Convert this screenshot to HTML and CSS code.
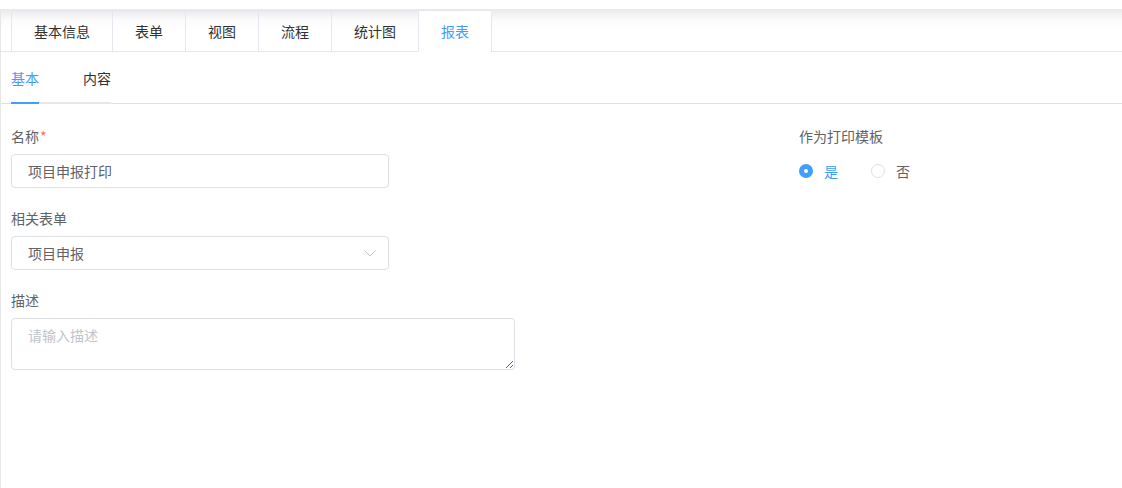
FILE: index.html
```html
<!DOCTYPE html>
<html lang="zh-CN">
<head>
  <meta charset="UTF-8">
  <meta name="viewport" content="width=device-width, initial-scale=1.0">
  <title>报表设置</title>
  <link rel="stylesheet" href="styles.css">
</head>
<body>
  <div class="page">
    <div class="card-tabs">
      <div class="card-nav">
        <div class="card-tab">基本信息</div>
        <div class="card-tab">表单</div>
        <div class="card-tab">视图</div>
        <div class="card-tab">流程</div>
        <div class="card-tab">统计图</div>
        <div class="card-tab active">报表</div>
      </div>
    </div>

    <div class="sub-tabs">
      <div class="sub-nav">
        <div class="sub-tab active">基本</div>
        <div class="sub-tab">内容</div>
      </div>
    </div>

    <form class="report-form">
      <div class="col-left">
        <div class="field">
          <label>名称<span class="req">*</span></label>
          <input class="input" type="text" value="项目申报打印">
        </div>
        <div class="field">
          <label>相关表单</label>
          <div class="select">
            <span>项目申报</span>
            <svg width="12" height="7" viewBox="0 0 12 7"><path d="M0.5 0.5 L6 6 L11.5 0.5" fill="none" stroke="#c0c4cc" stroke-width="1"/></svg>
          </div>
        </div>
        <div class="field">
          <label>描述</label>
          <textarea class="textarea" placeholder="请输入描述"></textarea>
        </div>
      </div>
      <div class="col-right">
        <div class="field">
          <label>作为打印模板</label>
          <div class="radio-group">
            <span class="radio checked"><i></i>是</span>
            <span class="radio"><i></i>否</span>
          </div>
        </div>
      </div>
    </form>
  </div>
</body>
</html>
```

FILE: styles.css
```css
body {
  margin: 0;
  background: #fff;
  font-family: "Noto Sans CJK SC", "Noto Sans", sans-serif;
  font-size: 14px;
  color: #606266;
}
.page {
  margin-top: 9px;
  min-height: 479px;
  border-left: 1px solid #e6e6e6;
  background: linear-gradient(#e9e9e9, #fbfbfb 11px, #fff 20px);
  padding-top: 1px;
}

/* top card tabs */
.card-tabs {
  padding-left: 10px;
  border-bottom: 1px solid #e4e7ed;
}
.card-nav {
  display: inline-flex;
  border: 1px solid #e4e7ed;
  border-bottom: none;
  border-radius: 4px 4px 0 0;
  margin-bottom: -1px;
}
.card-tab {
  height: 40px;
  line-height: 40px;
  padding: 0 22px;
  color: #303133;
  border-left: 1px solid #e4e7ed;
  border-bottom: 1px solid transparent;
}
.card-tab:first-child {
  border-left: none;
}
.card-tab.active {
  color: #409eff;
  background: #fff;
  border-bottom-color: #fff;
}

/* inner line tabs */
.sub-tabs {
  padding-left: 10px;
  margin-top: 6px;
  border-bottom: 1px solid #e0e0e0;
}
.sub-nav {
  display: inline-flex;
  border-bottom: 2px solid #e4e7ed;
  margin-bottom: -1px;
}
.sub-tab {
  line-height: 40px;
  padding-bottom: 4px;
  color: #303133;
  border-bottom: 2px solid transparent;
  margin-bottom: -2px;
}
.sub-tab:first-child {
  margin-right: 44px;
}
.sub-tab.active {
  color: #409eff;
  border-bottom-color: #409eff;
}

/* form */
.report-form {
  display: grid;
  grid-template-columns: 788px 1fr;
  padding: 22px 0 0 10px;
}
.field {
  margin-bottom: 20px;
}
.field label {
  display: block;
  line-height: 20px;
  margin-bottom: 8px;
  color: #606266;
}
.req {
  color: #f56c6c;
  margin-left: 1px;
}
.input, .select {
  box-sizing: border-box;
  width: 378px;
  height: 34px;
  border: 1px solid #dcdfe6;
  border-radius: 4px;
  padding: 0 16px;
  font: inherit;
  color: #606266;
  background: #fff;
  outline: none;
}
.select {
  display: flex;
  align-items: center;
  justify-content: space-between;
  padding-right: 12px;
}
.textarea {
  box-sizing: border-box;
  display: block;
  width: 504px;
  height: 52px;
  border: 1px solid #dcdfe6;
  border-radius: 4px;
  padding: 6px 16px;
  font: inherit;
  line-height: 20px;
  color: #606266;
  resize: vertical;
  outline: none;
}
.textarea::placeholder {
  color: #c0c4cc;
}

/* radios */
.radio-group {
  display: flex;
  align-items: center;
  height: 34px;
  margin-top: 1px;
}
.radio {
  display: inline-flex;
  align-items: center;
  margin-right: 33px;
  color: #606266;
}
.radio i {
  box-sizing: border-box;
  width: 14px;
  height: 14px;
  border: 1px solid #dcdfe6;
  border-radius: 50%;
  margin-right: 11px;
  background: #fff;
}
.radio.checked {
  color: #409eff;
}
.radio.checked i {
  border: 5px solid #409eff;
  background: #fff;
}
```
